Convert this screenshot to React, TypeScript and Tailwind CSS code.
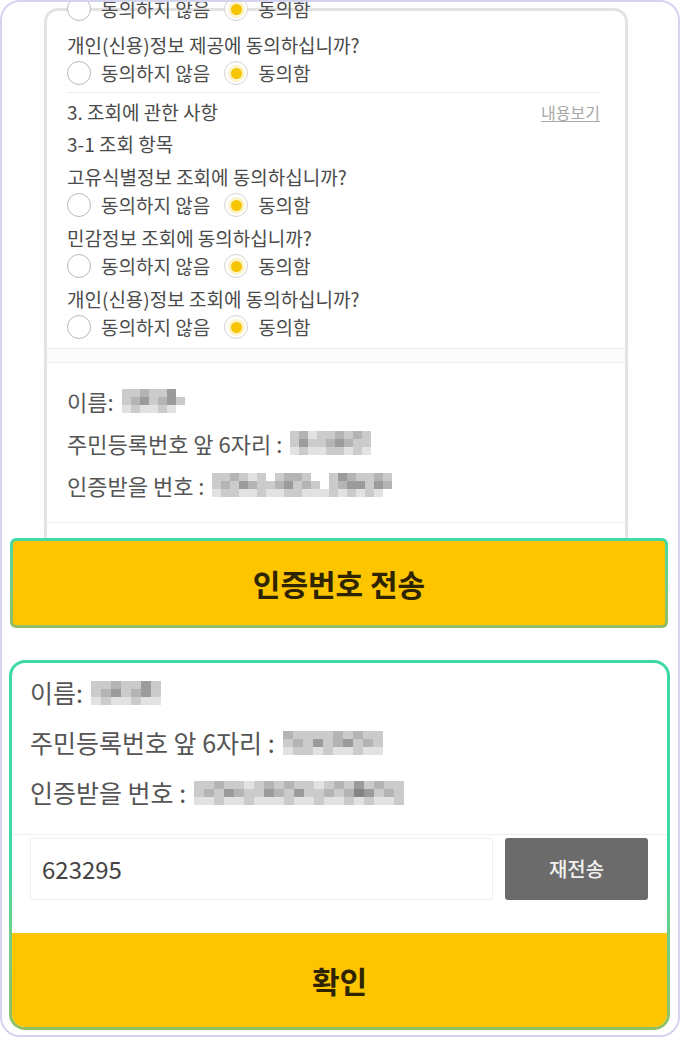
import { type ReactNode } from 'react'

const KR = "font-['Noto_Sans_CJK_KR','Noto_Sans',sans-serif]"

const SHADES: Record<string, string> = {
  w: 'bg-transparent',
  a: 'bg-[#e2e2e2]',
  b: 'bg-[#cbcbcb]',
  c: 'bg-[#b4b4b4]',
  d: 'bg-[#9b9b9b]',
  e: 'bg-[#848484]',
}

function Mosaic({ rows, cell = 'w-[9px] h-[8px]' }: { rows: string[]; cell?: string }) {
  return (
    <div className="flex flex-col">
      {rows.map((row, i) => (
        <div key={i} className="flex">
          {row.split('').map((k, j) => (
            <div key={j} className={`${cell} ${SHADES[k]}`} />
          ))}
        </div>
      ))}
    </div>
  )
}

function Radio({ checked, label }: { checked?: boolean; label: string }) {
  return (
    <span className="flex items-center gap-[10px]">
      <span
        className={`flex h-6 w-6 items-center justify-center rounded-full border-[1.5px] bg-white ${
          checked ? 'border-[#d4d4d4]' : 'border-[#b9b9b9]'
        }`}
      >
        {checked && <span className="h-[11px] w-[11px] rounded-full bg-[#f6c400] shadow-[0_0_0_3px_#fdf3c8]" />}
      </span>
      <span>{label}</span>
    </span>
  )
}

function RadioRow() {
  return (
    <div className="flex h-[28px] items-center gap-[14px] text-[19px] text-[#4d4d4d]">
      <Radio label="동의하지 않음" />
      <Radio checked label="동의함" />
    </div>
  )
}

function Question({ text }: { text: string }) {
  return (
    <div className="mb-[5px]">
      <div className="flex h-[28px] items-center text-[19px] text-[#4a4a4a]">{text}</div>
      <RadioRow />
    </div>
  )
}

function InfoRow({ label, children, className }: { label: string; children: ReactNode; className: string }) {
  return (
    <div className={`flex items-center gap-[8px] text-[#555] ${className}`}>
      <span>{label}</span>
      {children}
    </div>
  )
}

function YellowButton({ label, className }: { label: string; className: string }) {
  return (
    <div className={`flex items-center justify-center bg-[#fcc500] font-bold text-[#2e2400] ${className}`}>{label}</div>
  )
}

export default function App() {
  return (
    <div className={`h-[1037px] w-[680px] overflow-hidden rounded-[20px] border-2 border-[#d4d4ee] bg-white ${KR}`}>
      {/* scrolled terms card */}
      <div className="ml-[42px] mt-[6px] flex h-[530px] w-[584px] flex-col rounded-t-[14px] border-[3px] border-b-0 border-[#e3e3e3]">
        <div className="-mt-[16px] pl-[20px] pr-[25px]">
          <RadioRow />
          <div className="mt-[8px]">
            <Question text="개인(신용)정보 제공에 동의하십니까?" />
          </div>
          <div className="mt-[2px] border-t border-[#f0f0f0] pt-[5px]">
            <div className="flex h-[28px] items-center justify-between text-[19px] text-[#4a4a4a]">
              <span>3. 조회에 관한 사항</span>
              <span className="text-[16px] text-[#a8a8a8] underline underline-offset-2">내용보기</span>
            </div>
            <div className="mt-[4px] flex h-[28px] items-center text-[19px] text-[#4a4a4a]">3-1 조회 항목</div>
            <div className="mt-[5px]">
              <Question text="고유식별정보 조회에 동의하십니까?" />
              <Question text="민감정보 조회에 동의하십니까?" />
              <Question text="개인(신용)정보 조회에 동의하십니까?" />
            </div>
          </div>
        </div>
        <div className="mt-[2px] h-[15px] border-y border-[#ececec] bg-[#fbfbfb]" />
        <div className="border-b border-[#f0f0f0] pb-[16px] pl-[20px] pt-[17px] text-[22px]">
          <InfoRow label="이름:" className="h-[42px]">
            <Mosaic rows={['bbcbbdw', 'bcdbcdb', 'abaabaw']} />
          </InfoRow>
          <InfoRow label="주민등록번호 앞 6자리 :" className="h-[42px]">
            <Mosaic rows={['bcabbcbcb', 'bdbbcdcbb', 'abaabbaba']} />
          </InfoRow>
          <InfoRow label="인증받을 번호 :" className="h-[42px]">
            <Mosaic rows={['bbcbabwbccbwwbdcbbcb', 'bcbdcbbcdbcbwbcddbdc', 'abbaabaabbaaabababaw']} />
          </InfoRow>
        </div>
      </div>

      {/* send button */}
      <div className="ml-[8px] w-[658px] rounded-[6px] bg-linear-to-b from-[#3edaa6] to-[#93bb63] p-[3px]">
        <YellowButton label="인증번호 전송" className="h-[84px] rounded-[3px] text-[30px]" />
      </div>

      {/* verification card */}
      <div className="ml-[7px] mt-[32px] w-[661px] rounded-[16px] bg-linear-to-b from-[#3cd9a4] from-55% to-[#92bf62] p-[3px]">
        <div className="flex h-[364px] flex-col overflow-hidden rounded-[13px] bg-white">
          <div className="pl-[18px] pt-[5px] text-[25px]">
            <InfoRow label="이름:" className="h-[50px]">
              <Mosaic cell="w-[10px] h-[8px]" rows={['bbcbbdb', 'bcdbcdb', 'abaabaa']} />
            </InfoRow>
            <InfoRow label="주민등록번호 앞 6자리 :" className="h-[50px]">
              <Mosaic cell="w-[10px] h-[8px]" rows={['cbbbbcbcbb', 'bcbdbcdbcb', 'abbabaabaa']} />
            </InfoRow>
            <InfoRow label="인증받을 번호 :" className="h-[50px]">
              <Mosaic cell="w-[10px] h-[8px]" rows={['bbcbbabcbcbbabcbdbcbb', 'bcbdcbbdcbdbbcbcedbcb', 'aabaabaaabaabaababaab']} />
            </InfoRow>
          </div>
          <div className="mt-[16px] flex gap-[12px] border-t border-[#efefef] pl-[18px] pr-[19px] pt-[3px]">
            <div className="flex h-[62px] flex-1 items-center rounded-[2px] border border-[#efefef] pl-[11px] text-[24px] text-[#444]">
              623295
            </div>
            <div className="flex h-[62px] w-[143px] items-center justify-center rounded-[3px] bg-[#6b6b6b] text-[20px] font-medium text-[#f0f0f0]">
              재전송
            </div>
          </div>
          <YellowButton label="확인" className="mt-auto h-[94px] text-[30px]" />
        </div>
      </div>
    </div>
  )
}
